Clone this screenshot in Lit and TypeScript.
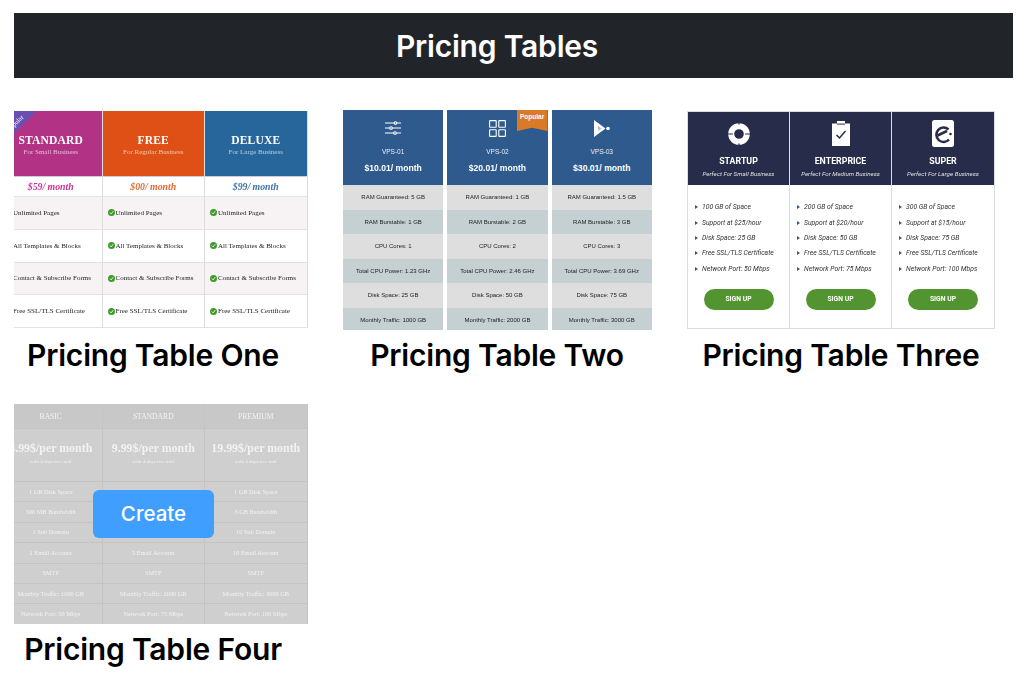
import { LitElement, html, css, svg } from "lit";
import { customElement } from "lit/decorators.js";

const one = [
  { n: "STANDARD", s: "For Small Business", p: "$59/ month", bg: "#b23386", c: "#c9349a" },
  { n: "FREE", s: "For Regular Business", p: "$00/ month", bg: "#de5015", c: "#df6a33" },
  { n: "DELUXE", s: "For Large Business", p: "$99/ month", bg: "#27669b", c: "#3f74a8" },
];
const oneRows = ["Unlimited Pages", "All Templates & Blocks", "Contact & Subscribe Forms", "Free SSL/TLS Certificate"];

const sliders = svg`<svg viewBox="0 0 16 14" width="16" height="14" fill="none" stroke="#fff" stroke-width="1.100"><path d="M0 2h16M0 7h16M0 12h16"/><circle cx="10.500" cy="2" r="1.300" fill="#2f5a8e"/><circle cx="6" cy="7" r="1.300" fill="#2f5a8e"/><circle cx="10" cy="12" r="1.300" fill="#2f5a8e"/></svg>`;
const squares = svg`<svg viewBox="0 0 17 17" width="17" height="17" fill="none" stroke="#fff" stroke-width="1.100"><rect x=".6" y=".6" width="6.600" height="6.600" rx=".5"/><rect x="9.800" y=".6" width="6.600" height="6.600" rx=".5"/><rect x=".6" y="9.800" width="6.600" height="6.600" rx=".5"/><rect x="9.800" y="9.800" width="6.600" height="6.600" rx=".5"/></svg>`;
const play = svg`<svg viewBox="0 0 16 17" width="16" height="17"><path d="M0 0L11.500 8.500L0 17z" fill="#fff"/><path d="M4 6L7.500 8.500L4 11z" fill="#a9bdd6"/><circle cx="14" cy="8.500" r="1.800" fill="#fff"/></svg>`;
const two = [
  { i: sliders, n: "VPS-01", p: "$10.01/ month", r: ["RAM Guaranteed: 5 GB", "RAM Burstable: 1 GB", "CPU Cores: 1", "Total CPU Power: 1.23 GHz", "Disk Space: 25 GB", "Monthly Traffic: 1000 GB"] },
  { i: squares, n: "VPS-02", p: "$20.01/ month", r: ["RAM Guaranteed: 1 GB", "RAM Burstable: 2 GB", "CPU Cores: 2", "Total CPU Power: 2.46 GHz", "Disk Space: 50 GB", "Monthly Traffic: 2000 GB"] },
  { i: play, n: "VPS-03", p: "$30.01/ month", r: ["RAM Guaranteed: 1.5 GB", "RAM Burstable: 3 GB", "CPU Cores: 3", "Total CPU Power: 3.69 GHz", "Disk Space: 75 GB", "Monthly Traffic: 3000 GB"] },
];

const buoy = svg`<svg viewBox="0 0 22 24" width="22" height="24"><circle cx="11" cy="12" r="7.800" fill="none" stroke="#fff" stroke-width="6"/><path d="M0 12h5M17 12h5M11 0v2.500M11 21.500v2.500" stroke="#262c49" stroke-width="1.200"/></svg>`;
const clip = svg`<svg viewBox="0 0 18 25" width="18" height="25"><path d="M0 2.500h5v-2.500h8v2.500h5v22.500h-18z" fill="#fff"/><rect x="5" y="2.600" width="8" height="1" fill="#262c49"/><path d="M4.500 14l3 3 6-7" fill="none" stroke="#262c49" stroke-width="1.500"/></svg>`;
const eLogo = svg`<svg viewBox="0 0 22 27" width="22" height="27"><rect width="22" height="27" rx="2.500" fill="#fff"/><path d="M16.500 9.500a7.200 7.200 0 1 0 .5 10" fill="none" stroke="#262c49" stroke-width="2.500"/><path d="M5.500 15.500L15 11" stroke="#262c49" stroke-width="2.500"/><circle cx="18.500" cy="14" r="1.300" fill="#262c49"/></svg>`;
const three = [
  { i: buoy, n: "STARTUP", s: "Perfect For Small Business", r: ["100 GB of Space", "Support at $25/hour", "Disk Space: 25 GB", "Free SSL/TLS Certificate", "Network Port: 50 Mbps"] },
  { i: clip, n: "ENTERPRICE", s: "Perfect For Medium Business", r: ["200 GB of Space", "Support at $20/hour", "Disk Space: 50 GB", "Free SSL/TLS Certificate", "Network Port: 75 Mbps"] },
  { i: eLogo, n: "SUPER", s: "Perfect For Large Business", r: ["300 GB of Space", "Support at $15/hour", "Disk Space: 75 GB", "Free SSL/TLS Certificate", "Network Port: 100 Mbps"] },
];

const four = [
  { n: "BASIC", p: "4.99$/per month", r: ["1 GB Disk Space", "500 MB Bandwidth", "1 Sub Domain", "1 Email Account", "SMTP", "Monthly Traffic: 1000 GB", "Network Port: 50 Mbps"] },
  { n: "STANDARD", p: "9.99$/per month", r: ["1 GB Disk Space", "1 GB Bandwidth", "5 Sub Domain", "5 Email Account", "SMTP", "Monthly Traffic: 2000 GB", "Network Port: 75 Mbps"] },
  { n: "PREMIUM", p: "19.99$/per month", r: ["1 GB Disk Space", "5 GB Bandwidth", "10 Sub Domain", "10 Email Account", "SMTP", "Monthly Traffic: 3000 GB", "Network Port: 100 Mbps"] },
];

@customElement("app-root")
export class AppRoot extends LitElement {
  static styles = css`
    :host { display: block; background: #fff; font-family: Inter, "Liberation Sans", sans-serif; color: #000; }
    .page { padding: 13px 11px 10px 14px; display: flex; flex-direction: column; gap: 32px; }
    h1 { margin: 0; height: 65px; padding-right: 33px; background: #212529; color: #fff; font-size: 30px; font-weight: 600; display: flex; align-items: center; justify-content: center; letter-spacing: -0.2px; }
    .clip { overflow: hidden; }
    .grid { display: grid; grid-template-columns: repeat(3, 310px); column-gap: 34px; row-gap: 24px; margin-left: -16px; }
    .card { display: flex; flex-direction: column; align-items: center; }
    .thumb { width: 310px; height: 220px; position: relative; overflow: hidden; filter: blur(0.45px); box-sizing: border-box; }
    .cap { height: 50px; font-size: 30px; font-weight: 600; display: flex; align-items: center; white-space: nowrap; letter-spacing: -0.2px; }

    /* table one */
    .t1 { display: grid; grid-template-columns: repeat(3, 102.500px); padding: 1px 0 0 2px; font-family: "Liberation Serif", serif; background: #fff; }
    .t1c { display: grid; grid-template-rows: 66px 20px repeat(4, 32.800px); border-right: 1px solid #ddd; }
    .t1h { color: #fff; display: flex; flex-direction: column; align-items: center; padding-top: 22px; box-sizing: border-box; border-bottom: 1px solid #ccd; }
    .t1h b { font-size: 11.500px; line-height: 15px; letter-spacing: .2px; }
    .t1h span { font-size: 7px; line-height: 9px; opacity: .65; }
    .t1p { font-size: 9.800px; font-weight: 700; font-style: italic; display: flex; align-items: center; justify-content: center; border-bottom: 1px solid #e4e4e4; }
    .t1r { font-size: 7px; color: #222; display: flex; align-items: center; gap: 1px; padding-left: 5px; white-space: nowrap; border-bottom: 1.500px solid #e2e2e2; box-sizing: border-box; }
    .t1r:nth-child(odd) { background: #f7f3f4; }
    .check { width: 7px; height: 7px; flex: none; }
    .ribbon { position: absolute; left: 2px; top: 1px; width: 37px; height: 37px; background: #6a4fb0; clip-path: polygon(0 0, 100% 0, 0 100%); color: #fff; font-size: 6.500px; font-family: "Liberation Serif", serif; }
    .ribbon span { position: absolute; left: 15px; top: 12px; transform: translate(-50%, -50%) rotate(-45deg); white-space: nowrap; }

    /* table two */
    .t2 { display: grid; grid-template-columns: repeat(3, 100.300px); column-gap: 4px; padding-left: 1px; font-family: "Liberation Sans", sans-serif; }
    .t2h { height: 75px; background: #2f5a8e; color: #fff; display: flex; flex-direction: column; align-items: center; box-sizing: border-box; padding-top: 9px; position: relative; }
    .t2i { height: 18px; display: flex; align-items: center; }
    .t2n { font-size: 6.500px; margin-top: 11px; line-height: 8px; opacity: .9; }
    .t2p { font-size: 8.600px; font-weight: 700; margin-top: 7px; line-height: 11px; }
    .t2r { height: 24.500px; display: flex; align-items: center; justify-content: center; font-size: 6px; color: #222; background: #dedede; white-space: nowrap; }
    .t2r.d { background: #c5d0d2; }
    .pop { position: absolute; right: 0; top: 0; width: 31px; height: 21px; background: #d97a26; clip-path: polygon(0 0, 100% 0, 100% 100%, 50% 85%, 0 100%); color: #fff; font-size: 6.500px; font-weight: 700; text-align: center; line-height: 13px; }

    /* table three */
    .t3 { display: grid; grid-template-columns: repeat(3, 102px); margin: 1px 0 0 1px; width: 308px; height: 218px; box-sizing: border-box; border: 1.500px solid #d8dee2; font-family: "Roboto", "Liberation Sans", sans-serif; }
    .t3c { border-right: 1.500px solid #d8dee2; display: flex; flex-direction: column; align-items: center; }
    .t3c:last-child { border-right: 0; }
    .t3h { width: 100%; height: 73px; background: #262c49; color: #fff; display: flex; flex-direction: column; align-items: center; box-sizing: border-box; padding-top: 8px; }
    .t3i { height: 27px; display: flex; align-items: center; }
    .t3n { font-size: 8.800px; font-weight: 700; margin-top: 7.500px; line-height: 12px; }
    .t3s { font-size: 6.200px; font-style: italic; margin-top: 3px; line-height: 8px; opacity: .85; }
    .t3l { list-style: none; margin: 14.500px 0 0; padding: 0 0 0 7px; align-self: stretch; }
    .t3l li { height: 15.400px; font-size: 6.800px; font-style: italic; color: #333; display: flex; align-items: center; gap: 4px; white-space: nowrap; }
    .t3l li::before { content: ""; width: 0; height: 0; border-left: 3px solid #2f5a8e; border-top: 2.500px solid transparent; border-bottom: 2.500px solid transparent; flex: none; }
    .t3b { margin-top: 12.500px; width: 70px; height: 21px; border-radius: 10.500px; background: #529530; color: #fff; font-size: 6.800px; font-weight: 700; display: flex; align-items: center; justify-content: center; }

    /* table four */
    .t4 { display: grid; grid-template-columns: repeat(3, 102.500px); padding-left: 2px; height: 220px; font-family: "Liberation Serif", serif; background: #cfcfcf; color: #f2f2f2; }
    .t4c { display: grid; grid-template-rows: 24px 53px repeat(7, 20.400px); border-right: 1px solid #c4c4c4; }
    .t4h { background: #c8c8c8; display: flex; align-items: center; justify-content: center; font-size: 7.600px; }
    .t4p { display: flex; flex-direction: column; align-items: center; padding-top: 12px; box-sizing: border-box; border-top: 1px solid #c4c4c4; white-space: nowrap; }
    .t4p b { font-size: 11.900px; font-weight: 700; line-height: 15px; }
    .t4p span { font-size: 5px; line-height: 7px; margin-top: 2px; }
    .t4r { display: flex; align-items: center; justify-content: center; font-size: 6.300px; padding-bottom: 1px; border-top: 1px solid #c4c4c4; white-space: nowrap; box-sizing: border-box; }
    .t4wrap { position: relative; }
    .create { position: absolute; left: 95px; top: 86px; width: 121px; height: 48px; border: 0; border-radius: 6px; background: #409eff; color: #fff; font-family: Inter, "Liberation Sans", sans-serif; font-size: 20.500px; font-weight: 500; padding: 0 0 1px; }
  `;

  private check() {
    return svg`<svg class="check" viewBox="0 0 10 10"><circle cx="5" cy="5" r="5" fill="#3f9a2c"/><path d="M2.500 5l2 2 3-4" fill="none" stroke="#fff" stroke-width="1.200"/></svg>`;
  }

  render() {
    return html`<div class="page">
      <h1>Pricing Tables</h1>
      <div class="clip"><div class="grid">
        <div class="card">
          <div class="thumb"><div class="t1">
            ${one.map((c) => html`<div class="t1c">
              <div class="t1h" style="background:${c.bg}"><b>${c.n}</b><span>${c.s}</span></div>
              <div class="t1p" style="color:${c.c}">${c.p}</div>
              ${oneRows.map((r) => html`<div class="t1r">${this.check()}${r}</div>`)}
            </div>`)}
          </div><div class="ribbon"><span>Popular</span></div></div>
          <div class="cap">Pricing Table One</div>
        </div>
        <div class="card">
          <div class="thumb"><div class="t2">
            ${two.map((c, i) => html`<div>
              <div class="t2h"><div class="t2i">${c.i}</div><div class="t2n">${c.n}</div><div class="t2p">${c.p}</div>
              ${i === 1 ? html`<div class="pop">Popular</div>` : ""}</div>
              ${c.r.map((r, j) => html`<div class="t2r ${j % 2 ? "d" : ""}">${r}</div>`)}
            </div>`)}
          </div></div>
          <div class="cap">Pricing Table Two</div>
        </div>
        <div class="card">
          <div class="thumb"><div class="t3">
            ${three.map((c) => html`<div class="t3c">
              <div class="t3h"><div class="t3i">${c.i}</div><div class="t3n">${c.n}</div><div class="t3s">${c.s}</div></div>
              <ul class="t3l">${c.r.map((r) => html`<li>${r}</li>`)}</ul>
              <div class="t3b">SIGN UP</div>
            </div>`)}
          </div></div>
          <div class="cap">Pricing Table Three</div>
        </div>
        <div class="card t4wrap">
          <div class="thumb"><div class="t4">
            ${four.map((c) => html`<div class="t4c">
              <div class="t4h">${c.n}</div>
              <div class="t4p"><b>${c.p}</b><span>with 4 days free trail</span></div>
              ${c.r.map((r) => html`<div class="t4r">${r}</div>`)}
            </div>`)}
          </div></div>
          <button class="create">Create</button>
          <div class="cap">Pricing Table Four</div>
        </div>
      </div></div>
    </div>`;
  }
}
